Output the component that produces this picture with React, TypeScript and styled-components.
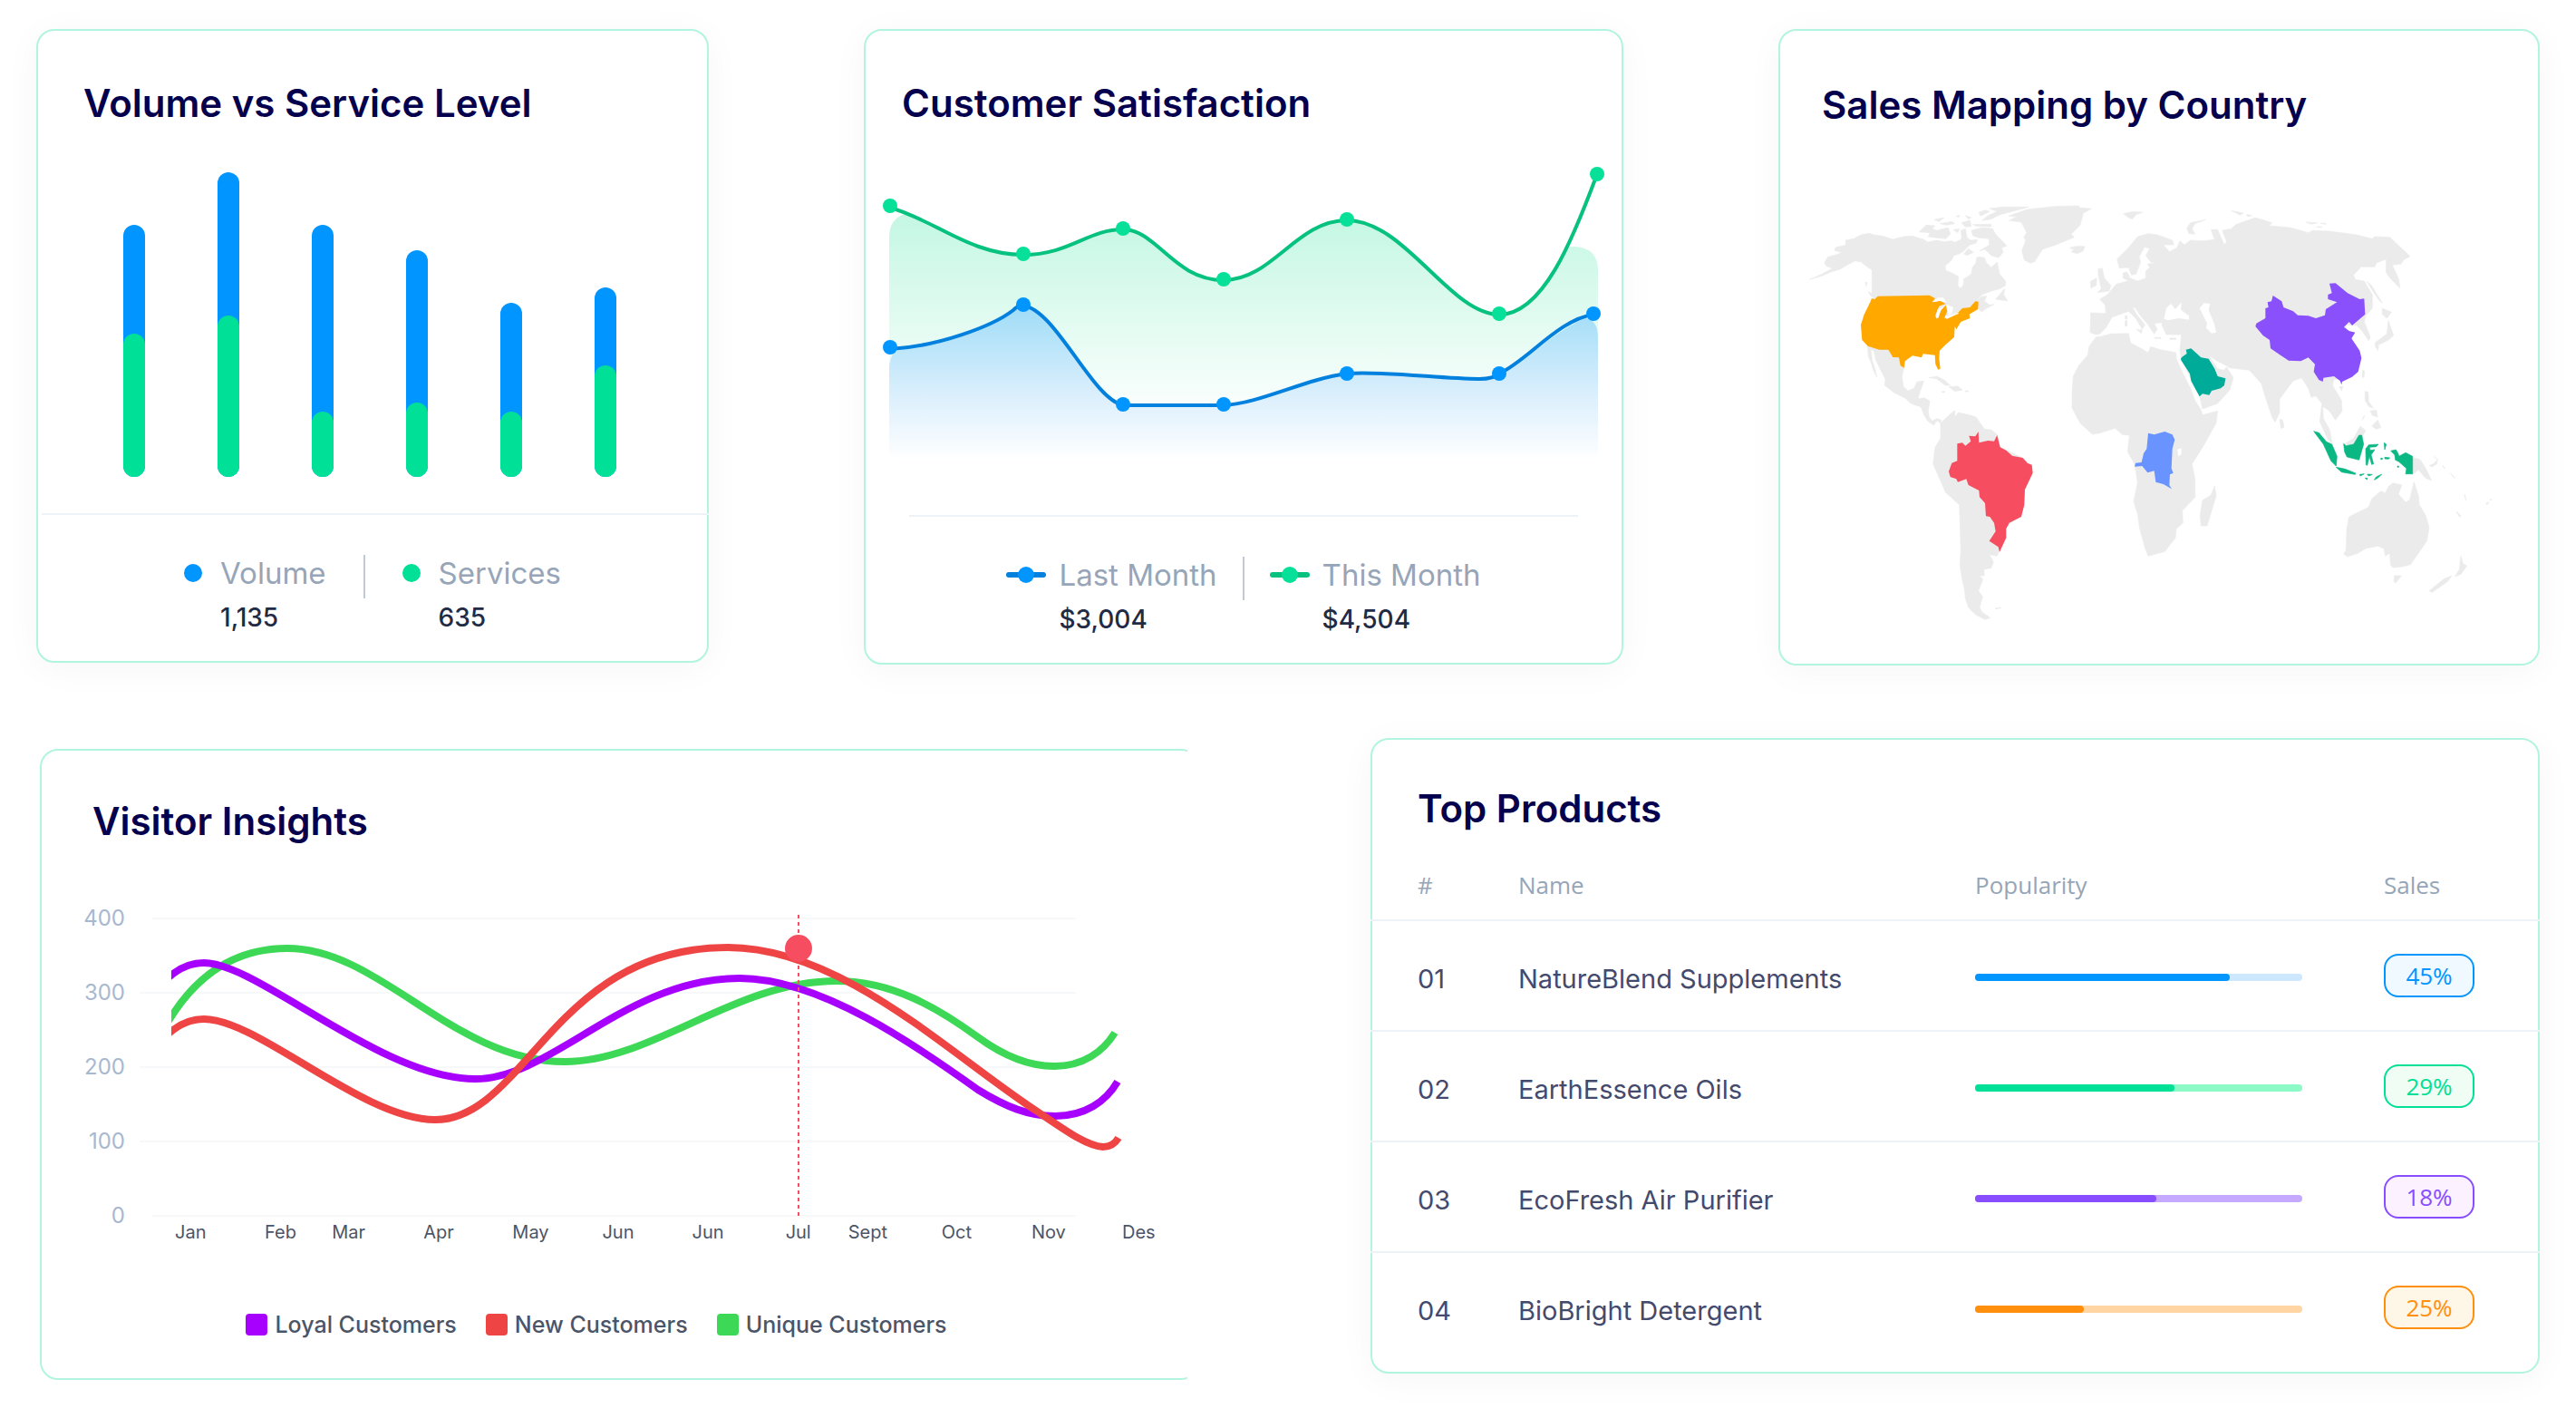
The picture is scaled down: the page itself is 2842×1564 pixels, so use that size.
import React from "react";
import styled, { createGlobalStyle } from "styled-components";

const color = {
  border: "#b1f4df",
  title: "#05004e",
  muted: "#96a5b8",
  value: "#222b45",
  body: "#444a6d",
  axis: "#a8b8d0",
  month: "#4b5567",
  rule: "#edf2f7",
  blue: "#0095ff",
  green: "#00e096",
  purple: "#884dff",
  orange: "#ff8f0d",
  loyal: "#a700ff",
  fresh: "#ef4444",
  unique: "#3cd856",
  marker: "#f64e60",
  land: "#ebebeb",
};

const GlobalStyle = createGlobalStyle`
  * { box-sizing: border-box; }
  body {
    margin: 0;
    background: #fff;
    font-family: Inter, "Open Sans", sans-serif;
  }
`;

const Page = styled.main`
  display: flex;
  flex-direction: column;
  gap: 80px;
  padding: 32px 40px;
`;

const TopRow = styled.div`
  display: grid;
  grid-template-columns: 742fr 838fr 840fr;
  column-gap: 171px;
  align-items: start;
`;

const BottomRow = styled.div`
  display: grid;
  grid-template-columns: 1270fr 1290fr;
  column-gap: 202px;
  align-items: start;
`;

const Card = styled.section<{ $flat?: boolean }>`
  display: flex;
  flex-direction: column;
  min-width: 0;
  background: #fff;
  border: 2px solid ${color.border};
  border-radius: 20px;
  box-shadow: ${(p) => (p.$flat ? "none" : "0 6px 40px rgba(0, 0, 0, 0.04)")};
`;

/* The visitor card runs past its column, which cuts off its right edge. */
const Cutoff = styled.div`
  min-width: 0;
  overflow: hidden;
  margin: 12px 0 0 4px;
`;

const WideCard = styled(Card)`
  margin-right: -13px;
  padding-right: 11px;
`;

const Title = styled.h2<{ $top: number; $left: number }>`
  margin: 0;
  padding: ${(p) => p.$top}px 24px 0 ${(p) => p.$left}px;
  font-size: 42px;
  line-height: 60px;
  font-weight: 600;
  color: ${color.title};
`;

/* ---------- legends under the two small charts ---------- */

const Rule = styled.hr<{ $inset: string }>`
  width: auto;
  height: 2px;
  margin: ${(p) => p.$inset};
  border: 0;
  background: ${color.rule};
`;

const Legend = styled.div<{ $gap: number }>`
  display: flex;
  justify-content: center;
  gap: ${(p) => p.$gap}px;
  padding: 40px 0 27px;
`;

const LegendItem = styled.dl<{ $gap: number }>`
  display: grid;
  grid-template-columns: auto auto;
  column-gap: ${(p) => p.$gap}px;
  row-gap: 4px;
  align-items: center;
  margin: 0;
`;

const LegendLabel = styled.dt`
  display: contents;
  font-size: 33px;
  line-height: 48px;
  color: ${color.muted};
`;

const LegendValue = styled.dd`
  grid-column: 2;
  margin: 0;
  font-size: 28px;
  line-height: 42px;
  font-weight: 500;
  color: ${color.value};
`;

const LegendRule = styled.span`
  width: 2px;
  height: 48px;
  margin-top: 4px;
  background: #bfcad6;
`;

const Dot = styled.span<{ $color: string }>`
  width: 20px;
  height: 20px;
  border-radius: 50%;
  background: ${(p) => p.$color};
`;

const LineMark = ({ line, dot }: { line: string; dot: string }) => (
  <svg width="44" height="20" viewBox="0 0 44 20" aria-hidden="true">
    <path d="M3 10H41" stroke={line} strokeWidth="6" strokeLinecap="round" />
    <circle cx="22" cy="10" r="9" fill={dot} />
  </svg>
);

/* ---------- Volume vs Service Level ---------- */

const Bars = styled.div`
  display: flex;
  justify-content: space-between;
  align-items: flex-end;
  height: 336px;
  margin: 46px 100px 40px 94px;
`;

const Bar = styled.div`
  display: flex;
  align-items: flex-end;
  width: 24px;
  border-radius: 12px;
  background: ${color.blue};
`;

const BarPart = styled.div`
  width: 24px;
  border-radius: 12px;
  background: ${color.green};
`;

const levels = [
  { volume: 278, services: 158 },
  { volume: 336, services: 178 },
  { volume: 278, services: 72 },
  { volume: 250, services: 82 },
  { volume: 192, services: 72 },
  { volume: 209, services: 123 },
];

const VolumeCard = () => (
  <Card>
    <Title $top={50} $left={50}>Volume vs Service Level</Title>
    <Bars>
      {levels.map((l, i) => (
        <Bar key={i} style={{ height: l.volume }}>
          <BarPart style={{ height: l.services }} />
        </Bar>
      ))}
    </Bars>
    <Rule $inset="0 -2px 0 4px" />
    <Legend $gap={41}>
      <LegendItem $gap={20}>
        <LegendLabel><Dot $color={color.blue} />Volume</LegendLabel>
        <LegendValue>1,135</LegendValue>
      </LegendItem>
      <LegendRule />
      <LegendItem $gap={20}>
        <LegendLabel><Dot $color={color.green} />Services</LegendLabel>
        <LegendValue>635</LegendValue>
      </LegendItem>
    </Legend>
  </Card>
);

/* ---------- Customer Satisfaction ---------- */

const AreaChart = styled.svg`
  display: block;
  width: auto;
  margin: 36px 14px 48px 15px;
`;

const thisMonth = [[982, 227], [1129, 280], [1239, 252], [1350, 308], [1486, 242], [1654, 346], [1762, 192]];
const lastMonth = [[982, 383], [1129, 336], [1239, 446], [1350, 446], [1486, 412], [1654, 412], [1758, 346]];

const SatisfactionCard = () => (
  <Card>
    <Title $top={50} $left={40}>Customer Satisfaction</Title>
    <AreaChart viewBox="970 180 805 340" role="img" aria-label="Customer satisfaction, last month and this month">
      <defs>
        <linearGradient id="thisFill" gradientUnits="userSpaceOnUse" x1="0" y1="236" x2="0" y2="470">
          <stop offset="0" stopColor="#c4f7e3" />
          <stop offset="1" stopColor="#ffffff" />
        </linearGradient>
        <linearGradient id="lastFill" gradientUnits="userSpaceOnUse" x1="0" y1="336" x2="0" y2="508">
          <stop offset="0" stopColor="#9edcf7" />
          <stop offset="0.55" stopColor="#d8eefc" />
          <stop offset="1" stopColor="#ffffff" />
        </linearGradient>
      </defs>
      <path
        fill="url(#thisFill)"
        d="M981 262C981 248 987 240 998 236C1035 252 1075 282 1129 282C1180 282 1200 253 1239 253C1276 253 1295 309 1350 309C1404 309 1430 243 1486 243C1550 243 1600 347 1654 347C1684 347 1708 313 1728 273Q1733 272 1738 272Q1763 274 1763 298V510H981Z"
      />
      <path
        fill="url(#lastFill)"
        d="M981 408Q981 390 992 385C1040 380 1095 360 1118 342Q1124 336 1129 336C1165 340 1205 440 1239 447H1350C1390 445 1440 418 1486 412C1530 409 1590 418 1632 418Q1648 418 1654 412C1685 398 1718 362 1750 351Q1763 354 1763 372V510H981Z"
      />
      <g fill="none" strokeWidth="4">
        <path
          stroke="#07c17f"
          d="M982 229C1030 242 1070 281 1129 281C1180 281 1200 253 1239 253C1276 253 1295 309 1350 309C1404 309 1430 243 1486 243C1550 243 1600 347 1654 347C1702 347 1735 265 1762 192"
        />
        <path
          stroke="#0280de"
          d="M982 385C1035 382 1095 360 1118 342Q1124 336 1129 337C1165 342 1205 440 1239 447H1350C1390 445 1440 418 1486 412C1530 409 1590 418 1632 418Q1648 418 1654 412C1685 398 1720 352 1758 347"
        />
      </g>
      {thisMonth.map(([x, y]) => <circle key={x} cx={x} cy={y} r="8" fill="#07e098" />)}
      {lastMonth.map(([x, y]) => <circle key={x} cx={x} cy={y} r="8" fill={color.blue} />)}
    </AreaChart>
    <Rule $inset="0 48px" />
    <Legend $gap={28}>
      <LegendItem $gap={14}>
        <LegendLabel><LineMark line="#0280de" dot={color.blue} />Last Month</LegendLabel>
        <LegendValue>$3,004</LegendValue>
      </LegendItem>
      <LegendRule />
      <LegendItem $gap={14}>
        <LegendLabel><LineMark line="#07c17f" dot="#07e098" />This Month</LegendLabel>
        <LegendValue>$4,504</LegendValue>
      </LegendItem>
    </Legend>
  </Card>
);

/* ---------- Sales Mapping by Country ---------- */

const WorldMap = styled.svg`
  display: block;
  width: auto;
  margin: 69px 40px 42px 26px;
`;

const northAmerica =
  "M20 280L60 262L95 243L75 235L68 225L80 205L110 197L125 190L102 184L105 174L130 168L140 165L138 150L165 145L190 132L215 127L235 133L260 136L295 147L330 138L360 136L378 142L395 146L410 156L440 150L465 155L490 152L500 157L520 148L523 140L520 118L535 112L540 140L552 150L575 148L570 160L550 165L530 185L515 195L497 200L490 215L468 235L470 250L490 258L512 270L510 300L518 309L528 300L530 278L555 262L558 240L570 225L572 208L582 205L598 208L605 225L620 240L640 222L648 262L668 285L668 300L650 310L610 322L590 330L570 350L590 336L605 335L598 352L615 364L630 362L605 375L588 388L580 378L575 360L550 372L520 380L490 395L470 400L440 440L335 550L332 570L325 600L330 635L345 648L365 640L375 618L398 616L385 650L378 674L400 672L417 682L412 715L415 735L425 748L440 740L455 745L452 758L446 748L438 750L430 762L410 748L398 728L388 702L355 690L335 672L300 655L268 630L270 610L250 570L238 545L232 515L222 512L227 550L236 575L242 602L230 580L225 560L214 535L211 500L250 440L240 350L226 330L226 248L210 238L190 222L170 218L150 228L120 246L90 255L60 268Z";

const northIslands =
  "M382 122L405 100L435 102L425 112L440 118L478 108L485 130L470 145L440 142L412 138L418 125ZM432 82L465 75L448 88ZM450 95L490 88L500 95L470 100ZM505 70L517 68L512 74ZM495 115L515 112L510 125ZM522 92L550 84L555 104L535 106ZM580 58L600 50L615 55L585 70ZM615 45L660 40L745 40L700 52L650 65L620 80L590 85L610 68L640 55ZM560 98L620 97L620 105L570 103ZM535 68L555 75L545 80Z" +
  "M555 118L590 108L625 112L635 130L672 168L655 175L660 190L645 208L620 200L600 180L582 185L615 165L612 145L580 142L560 135ZM530 195L545 178L562 190L540 200Z" +
  "M678 70L740 48L830 38L910 36L912 42L952 46L925 60L915 100L885 130L895 140L835 165L790 180L765 220L750 226L730 215L722 185L735 150L728 140L738 125L720 90L680 85L705 72Z" +
  "M880 175L900 170L930 170L925 185L905 194L885 188L895 182ZM1058 62L1090 55L1122 58L1100 65L1088 80L1075 75Z" +
  "M635 345L665 310L662 330L675 350L655 348ZM214 320L232 330L236 345L220 332ZM204 288L210 290L206 303Z" +
  "M415 605L440 600L465 612L485 630L468 630L440 608ZM480 635L510 633L525 645L500 650ZM457 650h10v3h-10zM535 648h9v3h-9z";

const usa =
  "M225 342L235 345L245 335L416 332L435 342L425 355L450 350L470 360L448 368L435 400L440 410L455 380L470 365L475 385L465 408L480 405L515 385L525 375L550 372L568 352L578 353L577 378L548 395L550 408L520 420L505 445L500 435L498 470L470 495L450 515L448 540L452 575L445 578L436 560L434 530L395 526L390 538L360 532L335 550L332 572L320 565L315 538L295 537L280 512L250 512L212 500L193 480L189 430L200 395L220 355Z";

const lakes =
  "M426 355L445 340L462 340L472 356L455 350ZM438 405L442 380L465 368L454 382L445 408ZM474 364L495 372L490 392L480 398L476 385ZM468 408L512 388L512 393L474 410Z";

const southAmerica =
  "M303 80L335 50L350 38L350 60L362 45L405 55L420 60L448 100L470 102L490 118L500 160L575 195L600 220L600 250L575 300L570 380L515 430L495 508L490 520L465 515L478 540L470 560L447 563L447 585L432 585L443 598L428 635L442 655L432 690L440 705L467 724L450 730L420 715L395 690L385 660L382 630L375 600L367 550L370 500L365 350L320 310L300 265L278 215L285 160L303 130ZM485 692h7v3h-7zM495 690h6v3h-6z";

const brazil =
  "M428 108L430 145L460 138L480 140L490 120L500 160L520 170L540 188L575 195L590 212L605 218L608 245L582 300L580 350L570 390L530 410L520 430L520 460L498 507L494 490L464 470L485 438L480 410L466 390L453 388L450 345L432 325L430 303L395 285L388 265L360 275L355 265L335 258L330 240L340 212L358 205L358 148L375 145L385 155L403 140L397 122L418 124Z";

const africa =
  "M98 470L115 468L145 460L205 458L212 490L250 510L270 522L278 502L310 512L345 518L362 522L364 545L385 590L410 640L425 680L445 712L450 728L500 715L495 755L450 835L415 890L425 940L425 1000L383 1045L385 1085L363 1105L360 1135L325 1180L270 1195L260 1170L242 1105L235 1055L222 1015L235 950L225 890L202 850L208 795L185 793L160 772L110 788L85 792L45 755L18 705L18 660L22 600L40 565L70 530L75 500ZM490 963L495 995L465 1095L445 1095L442 1060L450 1010L478 993Z";

const congo =
  "M990 113L1010 118L1045 108L1070 118L1078 135L1070 165L1067 230L1073 245L1062 250L1060 285L1068 298L1040 282L1015 275L1010 238L988 244L970 222L945 224L948 212L968 210L975 180L985 165Z";

const eurasia =
  "M78 455L80 390L130 392L128 365L110 345L135 330L165 295L192 288L205 284L187 275L187 258L200 255L210 275L235 285L262 275L262 252L275 240L268 228L298 226L278 222L262 200L275 178L258 172L240 205L245 222L230 262L215 265L205 240L175 242L167 212L200 180L235 138L270 128L300 132L350 150L355 165L320 165L340 188L365 175L375 152L390 165L410 150L450 152L490 148L478 115L500 115L522 165L530 155L515 118L545 112L560 98L610 80L625 75L680 92L670 102L740 108L800 125L815 118L870 120L960 132L1010 145L1020 138L1070 140L1110 178L1137 203L1115 215L1108 228L1078 232L1100 280L1103 308L1070 275L1057 255L1058 212L1025 225L1020 238L975 238L950 265L955 280L985 285L1012 330L1012 375L990 400L985 420L1005 470L1000 482L978 450L960 432L925 430L925 460L935 480L960 530L950 580L935 600L905 610L885 610L880 630L910 680L912 715L890 745L870 715L848 700L850 740L870 775L880 825L865 810L838 750L845 690L825 665L810 670L800 640L778 605L750 615L705 675L705 720L690 752L680 735L655 660L645 625L605 580L540 572L520 560L495 548L470 530L480 545L500 575L520 580L530 570L552 605L540 645L500 690L450 708L440 665L380 545L375 515L380 462L330 462L315 430L320 410L315 422L290 425L300 445L290 460L270 430L245 400L225 372L218 372L235 400L260 430L250 445L230 410L205 385L185 392L150 405L130 440L110 460L98 462Z";

const eurasiaIslands =
  "M993 285L1010 300L1045 358L1035 350L1015 320ZM1045 375L1075 388L1060 408L1045 395ZM1065 415L1082 465L1065 480L1025 500L1020 490L1040 475L1060 460ZM1020 497L1033 500L1030 515Z" +
  "M105 245L118 243L125 275L147 300L140 318L103 323L115 310L110 290L105 265ZM80 285L100 275L98 300L80 308ZM398 110L410 92L460 82L425 95L415 112L425 130L405 128Z" +
  "M194 400h6v10h-6zM194 416h6v18h-6zM232 445L250 447L247 458ZM292 472h20v3h-20zM342 474h20v4h-20zM545 52L585 60L575 67ZM595 65L615 68L600 72ZM792 90L830 92L810 97ZM828 105h16v3zM840 94h18v3z" +
  "M705 742L715 745L720 768L710 773ZM980 580L986 582L984 605L978 600ZM903 635L915 633L910 648ZM988 650L998 652L1000 685L1015 705L1000 700L988 680ZM1005 715L1025 712L1030 735L1012 730ZM1010 765L1030 745L1040 770L1025 775ZM978 745L985 730L986 735Z";

const inlandSeas =
  "M322 410L330 375L345 360L360 378L380 355L378 380L405 400L405 413L370 408L335 415ZM440 375L455 358L475 360L470 380L490 430L495 455L480 458L462 440L465 425ZM366 842L380 838L380 858L370 865Z";

const china =
  "M683 333L712 352L718 372L750 385L765 398L800 400L825 408L855 398L858 378L895 355L865 345L865 330L878 325L870 293L890 292L930 325L970 345L985 343L988 395L945 432L935 420L918 437L935 450L955 455L943 475L970 515L976 540L965 585L945 602L912 618L910 628L905 615L885 600L850 605L848 618L835 612L818 585L822 560L800 538L775 550L735 548L710 532L675 508L672 480L650 465L625 435L628 425L658 408L658 375L668 372L665 355L678 352Z";

const saudiArabia =
  "M395 512L412 508L445 538L470 542L490 575L500 600L526 607L522 630L510 640L480 648L472 662L450 658L440 667L428 645L412 615L408 592L378 545L380 538L398 525Z";

const indonesia =
  "M308 107L325 112L350 142L368 150L385 190L382 222L365 205L340 150ZM382 226L412 232L447 246L445 250L400 242ZM407 148L415 155L440 150L458 120L467 120L473 150L458 202L418 192L410 175ZM480 165L490 152L522 150L515 158L492 160L495 170L510 168L498 185L506 215L500 217L492 190L485 220L481 218ZM541 145L548 150L543 168ZM530 196h5v4h-5zM543 193L560 195L555 199L543 198ZM460 250L475 248L462 255ZM485 249L502 250L490 255ZM478 262L486 262L484 267ZM508 268L515 258L533 249L520 262ZM563 172L580 168L588 182L590 190L612 178L635 190L635 248L612 248L615 230L590 208L578 202L576 185ZM585 222h4v4h-4z";

const oceania =
  "M412 148L440 130L462 90L480 105L470 122L455 150L420 152ZM635 193L660 200L680 232L698 270L678 262L655 235L635 250ZM690 220L705 215L718 200L715 215L700 225ZM706 190L718 200L712 196ZM735 220L743 230L738 228ZM760 245L776 262L770 258ZM808 315L812 335L808 325Z" +
  "M570 278L600 285L588 315L612 342L625 335L640 275L655 320L657 350L678 385L690 425L682 470L655 510L628 548L600 555L570 558L562 548L560 510L545 520L540 495L520 487L480 495L455 510L420 522L407 513L415 500L417 430L425 390L490 358L500 330L530 305L545 312L555 290Z" +
  "M575 585L598 585L580 608L573 605ZM795 520L802 545L815 552L795 580L775 588L790 565ZM690 635L740 595L765 585L750 605L700 640ZM780 372L795 388L790 390ZM878 345L888 342L882 350ZM890 335L898 331L894 336Z";

const MapCard = () => (
  <Card>
    <Title $top={52} $left={46}>Sales Mapping by Country</Title>
    <WorldMap viewBox="0 0 2310 1425" role="img" aria-label="World map with six sales countries coloured">
      <g fill={color.land} stroke={color.land} strokeWidth="2" strokeLinejoin="round">
        <path d={northAmerica} />
        <path d={northIslands} />
        <path d={southAmerica} transform="translate(150 675)" />
        <g transform="translate(870 0)">
          <path d={africa} />
          <path d={eurasia} />
          <path d={eurasiaIslands} />
        </g>
        <path d={oceania} transform="translate(1380 675)" />
      </g>
      <path d={inlandSeas} fill="#fff" transform="translate(870 0)" />
      <path d={usa} fill="#ffa800" />
      <path d={lakes} fill="#fff" />
      <path d={brazil} fill="#f64e60" transform="translate(150 675)" />
      <path d={congo} fill="#6993ff" transform="translate(150 675)" />
      <path d={china} fill="#8950fc" transform="translate(870 0)" />
      <path d={saudiArabia} fill="#00ab9a" transform="translate(870 0)" />
      <path d={indonesia} fill="#0bb783" stroke="#0bb783" strokeWidth="2" strokeLinejoin="round" transform="translate(1380 675)" />
    </WorldMap>
  </Card>
);

/* ---------- Visitor Insights ---------- */

const ChartRow = styled.div`
  display: flex;
  align-items: flex-start;
  gap: 16px;
  margin-top: 61px;
`;

const YAxis = styled.ol`
  display: flex;
  flex-direction: column;
  flex: none;
  gap: 50px;
  width: 92px;
  margin: 0;
  padding: 0;
  list-style: none;
  text-align: right;
  font-size: 24px;
  line-height: 32px;
  color: ${color.axis};
`;

const Plot = styled.div`
  flex: 1;
  min-width: 0;
`;

const Curves = styled.svg`
  display: block;
  width: calc(100% - 60px);
`;

const Months = styled.ol`
  display: flex;
  margin: 0;
  padding: 0 0 0 39px;
  list-style: none;
  font-size: 20px;
  line-height: 28px;
  color: ${color.month};
`;

const Month = styled.li<{ $share: number }>`
  flex: ${(p) => p.$share} 0 0;
`;

const Series = styled.ul`
  display: flex;
  justify-content: center;
  gap: 32px;
  margin: 72px 0 43px;
  padding: 0 40px 0 0;
  list-style: none;
`;

const SeriesItem = styled.li<{ $color: string }>`
  display: flex;
  align-items: center;
  gap: 8px;
  font-size: 25px;
  line-height: 32px;
  font-weight: 500;
  color: ${color.month};

  &::before {
    content: "";
    width: 24px;
    height: 24px;
    border-radius: 4px;
    background: ${(p) => p.$color};
  }
`;

const months: [string, number][] = [
  ["Jan", 99], ["Feb", 74], ["Mar", 101], ["Apr", 98], ["May", 99], ["Jun", 99],
  ["Jun", 103], ["Jul", 69], ["Sept", 103], ["Oct", 99], ["Nov", 100], ["Des", 72],
];

const VisitorCard = () => (
  <Cutoff>
    <WideCard $flat>
      <Title $top={48} $left={56}>Visitor Insights</Title>
      <ChartRow>
        <YAxis>
          {[400, 300, 200, 100, 0].map((n) => <li key={n}>{n}</li>)}
        </YAxis>
        <Plot>
          <Curves viewBox="154 997 1096 348" role="img" aria-label="Visitors per month by customer group">
            <clipPath id="plotArea"><rect x="189" y="997" width="1060" height="348" /></clipPath>
            <path d="M168 1013H1187M154 1095H1187M154 1177H1187M154 1259H1187M168 1341H1187" stroke="#f7f8f9" strokeWidth="2" />
            <g fill="none" strokeWidth="8" clipPath="url(#plotArea)">
              <path stroke={color.unique} d="M186 1126C220 1070 265 1046 317 1046C420 1046 500 1171 623 1171C720 1171 810 1082 923 1082C985 1082 1035 1112 1079 1144C1105 1163 1135 1176 1163 1176C1195 1176 1217 1160 1230 1139" />
              <path stroke={color.loyal} d="M186 1078Q204 1062 225 1062C285 1062 420 1190 524 1190C610 1190 690 1079 816 1079C905 1079 1012 1154 1079 1202C1110 1221 1135 1231 1164 1231C1197 1231 1220 1215 1233 1193" />
              <path stroke={color.fresh} d="M186 1140Q204 1124 225 1124C285 1124 400 1235 480 1235C580 1235 610 1045 803 1045C930 1045 1050 1165 1146 1227C1180 1250 1200 1264 1217 1265Q1228 1265 1234 1255" />
            </g>
            <path d="M881 1009V1345" stroke={color.marker} strokeWidth="2" strokeDasharray="4 4" />
            <circle cx="881" cy="1046" r="15" fill={color.marker} />
          </Curves>
          <Months>
            {months.map(([name, share], i) => <Month key={i} $share={share}>{name}</Month>)}
          </Months>
        </Plot>
      </ChartRow>
      <Series>
        <SeriesItem $color={color.loyal}>Loyal Customers</SeriesItem>
        <SeriesItem $color={color.fresh}>New Customers</SeriesItem>
        <SeriesItem $color={color.unique}>Unique Customers</SeriesItem>
      </Series>
    </WideCard>
  </Cutoff>
);

/* ---------- Top Products ---------- */

const Products = styled.table`
  width: calc(100% + 4px);
  margin: 0 -2px 12px;
  border-collapse: collapse;
  table-layout: fixed;
`;

/* Column shares add up to 1290. */
const HeadCell = styled.th<{ $share: number }>`
  width: calc(100% * ${(p) => p.$share} / 1290);
  padding: 36px 0 20px;
  border-bottom: 2px solid ${color.rule};
  font-family: "Open Sans", "Noto Sans", sans-serif;
  font-size: 26px;
  line-height: 36px;
  font-weight: 400;
  text-align: left;
  color: ${color.muted};

  &:first-child { padding-left: 52px; }
`;

const Row = styled.tr`
  height: 122px;
  border-bottom: 2px solid ${color.rule};

  &:last-child { height: 120px; border-bottom: 0; }
`;

const Cell = styled.td<{ $text?: boolean }>`
  padding: ${(p) => (p.$text ? "8px 0 0" : "0")};
  font-size: 29px;
  line-height: 42px;
  color: ${color.body};

  &:first-child { padding-left: 52px; }
`;

const Track = styled.div<{ $color: string }>`
  width: 80%;
  height: 8px;
  margin-top: 4px;
  border-radius: 4px;
  background: ${(p) => p.$color};
`;

const Fill = styled.div<{ $color: string }>`
  height: 8px;
  border-radius: 4px;
  background: ${(p) => p.$color};
`;

const Badge = styled.span<{ $color: string; $tint: string }>`
  display: flex;
  align-items: center;
  justify-content: center;
  width: 100px;
  height: 48px;
  border: 2px solid ${(p) => p.$color};
  border-radius: 16px;
  background: ${(p) => p.$tint};
  font-family: "Open Sans", "Noto Sans", sans-serif;
  font-size: 26px;
  line-height: 36px;
  color: ${(p) => p.$color};
`;

const products = [
  { id: "01", name: "NatureBlend Supplements", fill: 280, sales: "45%", color: color.blue, track: "#cde7ff", tint: "#f0f9ff" },
  { id: "02", name: "EarthEssence Oils", fill: 220, sales: "29%", color: color.green, track: "#8cfac7", tint: "#f0fdf4" },
  { id: "03", name: "EcoFresh Air Purifier", fill: 200, sales: "18%", color: color.purple, track: "#c5a8ff", tint: "#fbf1ff" },
  { id: "04", name: "BioBright Detergent", fill: 120, sales: "25%", color: color.orange, track: "#ffd5a4", tint: "#fef6e6" },
];

const ProductsCard = () => (
  <Card>
    <Title $top={46} $left={50}>Top Products</Title>
    <Products>
      <thead>
        <tr>
          <HeadCell scope="col" $share={163}>#</HeadCell>
          <HeadCell scope="col" $share={504}>Name</HeadCell>
          <HeadCell scope="col" $share={451}>Popularity</HeadCell>
          <HeadCell scope="col" $share={172}>Sales</HeadCell>
        </tr>
      </thead>
      <tbody>
        {products.map((p) => (
          <Row key={p.id}>
            <Cell $text>{p.id}</Cell>
            <Cell $text>{p.name}</Cell>
            <Cell>
              <Track $color={p.track}>
                <Fill $color={p.color} style={{ width: `${(p.fill / 360) * 100}%` }} />
              </Track>
            </Cell>
            <Cell><Badge $color={p.color} $tint={p.tint}>{p.sales}</Badge></Cell>
          </Row>
        ))}
      </tbody>
    </Products>
  </Card>
);

export default function App() {
  return (
    <Page>
      <GlobalStyle />
      <TopRow>
        <VolumeCard />
        <SatisfactionCard />
        <MapCard />
      </TopRow>
      <BottomRow>
        <VisitorCard />
        <ProductsCard />
      </BottomRow>
    </Page>
  );
}
